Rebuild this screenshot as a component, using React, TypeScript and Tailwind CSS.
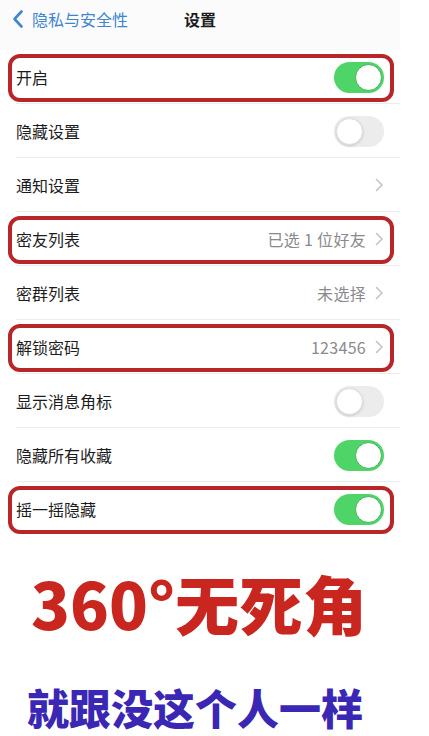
import React from 'react';

type Row = {
  label: string;
  toggle?: boolean;
  on?: boolean;
  value?: string;
  chevron?: boolean;
  marked?: boolean;
};

const rows: Row[] = [
  { label: '开启', toggle: true, on: true, marked: true },
  { label: '隐藏设置', toggle: true, on: false },
  { label: '通知设置', chevron: true },
  { label: '密友列表', value: '已选 1 位好友', chevron: true, marked: true },
  { label: '密群列表', value: '未选择', chevron: true },
  { label: '解锁密码', value: '123456', chevron: true, marked: true },
  { label: '显示消息角标', toggle: true, on: false },
  { label: '隐藏所有收藏', toggle: true, on: true },
  { label: '摇一摇隐藏', toggle: true, on: true, marked: true },
];

const Toggle: React.FC<{ on: boolean }> = ({ on }) => (
  <div
    className={
      on
        ? 'w-[50px] h-[31px] rounded-full bg-[#4fd467] flex items-center justify-end p-[2px]'
        : 'w-[50px] h-[31px] rounded-full bg-[#ececec] flex items-center justify-start p-[2px]'
    }
  >
    <div
      className={
        on
          ? 'w-[27px] h-[27px] rounded-full bg-white border border-[#3bb556]'
          : 'w-[27px] h-[27px] rounded-full bg-white border border-[#dcdcdc] shadow-[0_1px_3px_rgba(0,0,0,0.15)]'
      }
    />
  </div>
);

const Chevron = () => (
  <svg width="9" height="14" viewBox="0 0 9 14" className="ml-[9px]">
    <path d="M1.5 1.5 L7 7 L1.5 12.5" fill="none" stroke="#c3c3c7" strokeWidth="1.6" strokeLinecap="round" strokeLinejoin="round" />
  </svg>
);

export default function App() {
  return (
    <div
      className="w-[429px] h-[736px] bg-white overflow-hidden"
      style={{ fontFamily: '"Noto Sans CJK SC", "Noto Sans", sans-serif' }}
    >
      <div className="w-[400px]">
        {/* nav bar */}
        <div className="relative h-[50px] bg-[#fbfbfc] flex items-start pt-[7px]">
          <div className="flex items-center pl-[12px] text-[#3f86cf]">
            <svg width="12" height="20" viewBox="0 0 12 20">
              <path d="M9.5 2.5 L2.5 10 L9.5 17.5" fill="none" stroke="#3f86cf" strokeWidth="2.6" strokeLinecap="round" strokeLinejoin="round" />
            </svg>
            <span className="ml-[8px] text-[16px] leading-[24px]">隐私与安全性</span>
          </div>
          <div className="absolute left-0 right-0 top-[7px] text-center text-[16px] leading-[24px] font-bold text-[#1c1c1e]">
            设置
          </div>
        </div>

        {/* list */}
        <div className="bg-white">
          {rows.map((r, i) => (
            <div key={r.label} className="relative h-[54px]">
              <div className="h-full flex items-center pl-[16px] pr-[16px]">
                <span className="text-[16px] text-[#1c1c1e] flex-1">{r.label}</span>
                {r.value && <span className="text-[16px] tracking-[0.3px] text-[#8a8a8e]">{r.value}</span>}
                {r.chevron && <Chevron />}
                {r.toggle && <Toggle on={!!r.on} />}
              </div>
              {i < rows.length - 1 && (
                <div className="absolute left-[16px] right-0 bottom-0 h-px bg-[#ececee]" />
              )}
              {r.marked && (
                <div className="absolute left-[8px] right-[6px] top-[4px] bottom-[2px] rounded-[12px] border-[4px] border-[#b72628]" />
              )}
            </div>
          ))}
        </div>
      </div>

      {/* captions */}
      <div className="flex flex-col">
        <div className="mt-[30px] pl-[31px] text-[64px] leading-[72px] font-black text-[#c9261f]">
          360°无死角
        </div>
        <div className="mt-[47px] pl-[27px] text-[42px] leading-[44px] font-black text-[#3a28b5]">
          就跟没这个人一样
        </div>
      </div>
    </div>
  );
}
